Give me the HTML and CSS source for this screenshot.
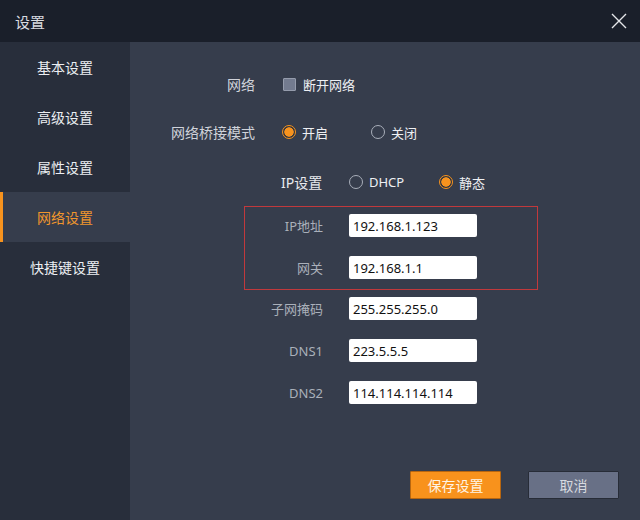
FILE: index.html
```html
<!DOCTYPE html>
<html>
	<head>
		<meta charset="UTF-8">
		<title>设置</title>
		<link rel="stylesheet" href="styles.css">
	</head>
	<body>
		<div class="window">
			<div class="titlebar">
				<span class="title">设置</span>
				<span class="close">
					<svg width="16" height="16" viewBox="0 0 16 16"><path d="M1 1L15 15M15 1L1 15" stroke="#e4e6ea" stroke-width="1.4" fill="none"/></svg>
				</span>
			</div>
			<div class="main">
				<ul class="sidebar">
					<li>基本设置</li>
					<li>高级设置</li>
					<li>属性设置</li>
					<li class="active">网络设置</li>
					<li>快捷键设置</li>
				</ul>
				<div class="content">
					<div class="row row-net">
						<span class="label">网络</span>
						<span class="opt"><i class="checkbox"></i>断开网络</span>
					</div>
					<div class="row row-bridge">
						<span class="label">网络桥接模式</span>
						<span class="opt opt-first"><i class="radio checked"></i>开启</span>
						<span class="opt"><i class="radio"></i>关闭</span>
					</div>
					<div class="row row-ip">
						<span class="ip-label">IP设置</span>
						<span class="opt opt-dhcp"><i class="radio"></i>DHCP</span>
						<span class="opt"><i class="radio checked"></i>静态</span>
					</div>
					<div class="fields">
						<div class="highlight">
							<div class="field">
								<span class="flabel">IP地址</span>
								<input class="finput" type="text" value="192.168.1.123">
							</div>
							<div class="field">
								<span class="flabel">网关</span>
								<input class="finput" type="text" value="192.168.1.1">
							</div>
						</div>
						<div class="plain">
							<div class="field">
								<span class="flabel">子网掩码</span>
								<input class="finput" type="text" value="255.255.255.0">
							</div>
							<div class="field">
								<span class="flabel">DNS1</span>
								<input class="finput" type="text" value="223.5.5.5">
							</div>
							<div class="field">
								<span class="flabel">DNS2</span>
								<input class="finput" type="text" value="114.114.114.114">
							</div>
						</div>
					</div>
					<div class="footer">
						<button class="btn btn-save">保存设置</button>
						<button class="btn btn-cancel">取消</button>
					</div>
				</div>
			</div>
		</div>
	</body>
</html>
```
FILE: styles.css
```css
*{
	box-sizing: border-box;
}
body{
	margin: 0;
	font-family: "Noto Sans", "Noto Sans CJK SC", sans-serif;
	background: #363d4c;
}
ul{
	padding: 0;
	margin: 0;
	list-style: none;
}
.window{
	width: 640px;
	height: 520px;
	display: flex;
	flex-direction: column;
	background: #363d4c;
}
.titlebar{
	height: 42px;
	flex: none;
	background: #1a1f2a;
	display: flex;
	align-items: center;
	justify-content: space-between;
	padding: 0 13px 0 15px;
}
.title{
	color: #d8dbe0;
	font-size: 15px;
}
.close{
	width: 16px;
	height: 16px;
	display: flex;
	margin-top: -1px;
}
.main{
	flex: 1;
	display: flex;
}
.sidebar{
	width: 130px;
	flex: none;
	background: #282e3b;
}
.sidebar li{
	height: 50px;
	display: flex;
	align-items: center;
	justify-content: center;
	color: #eceef2;
	font-size: 14px;
	border-left: 3px solid transparent;
	padding-right: 3px;
}
.sidebar li.active{
	background: #363d4c;
	border-left-color: #f7931e;
	color: #f0962c;
}
.content{
	flex: 1;
	display: flex;
	flex-direction: column;
	padding-top: 29px;
}
.row{
	height: 26px;
	display: flex;
	align-items: center;
}
.row-bridge{
	margin-top: 22px;
}
.row-ip{
	margin-top: 24px;
}
.label{
	width: 125px;
	text-align: right;
	color: #d0d3da;
	font-size: 14px;
	margin-right: 27px;
}
.opt{
	display: flex;
	align-items: center;
	color: #eef0f3;
	font-size: 13px;
}
.opt-first{
	width: 89px;
}
.opt-dhcp{
	width: 90px;
}
.ip-label{
	margin-left: 151px;
	width: 68px;
	color: #e8eaee;
	font-size: 14px;
}
.checkbox{
	width: 13px;
	height: 13px;
	background: #737b8f;
	border: 1px solid #959cac;
	border-radius: 1px;
	margin-right: 7px;
	margin-left: 1px;
}
.radio{
	width: 14px;
	height: 14px;
	border: 1px solid #a9afba;
	border-radius: 50%;
	margin-right: 6px;
}
.radio.checked{
	border-color: #f7931e;
	background: radial-gradient(circle, #f7931e 0, #f7931e 4.4px, #2d3340 5px);
}
.fields{
	margin-left: 114px;
	margin-top: 11px;
	width: 294px;
}
.highlight{
	border: 1px solid #c1393c;
	padding: 7px 0 10px;
	display: flex;
	flex-direction: column;
	gap: 19px;
}
.plain{
	padding: 7px 1px 0;
	display: flex;
	flex-direction: column;
	gap: 19px;
}
.field{
	display: flex;
	align-items: center;
	height: 23px;
}
.flabel{
	width: 78px;
	text-align: right;
	color: #aab0ba;
	font-size: 13px;
	margin-right: 26px;
}
.finput{
	width: 128px;
	height: 23px;
	border: none;
	border-radius: 2px;
	background: #fff;
	color: #111;
	font-family: "Noto Sans", "Noto Sans CJK SC", sans-serif;
	font-size: 13px;
	padding: 0 4px;
	outline: none;
}
.footer{
	margin-top: auto;
	display: flex;
	justify-content: flex-end;
	gap: 27px;
	padding: 0 21px 21px 0;
}
.btn{
	width: 91px;
	height: 28px;
	font-family: "Noto Sans", "Noto Sans CJK SC", sans-serif;
	font-size: 14px;
	border-radius: 1px;
	cursor: pointer;
}
.btn-save{
	background: #f8921c;
	border: 1px solid #b8660f;
	color: #fff4e4;
}
.btn-cancel{
	background: #687086;
	border: 1px solid #272c37;
	color: #d6d9df;
}
```
